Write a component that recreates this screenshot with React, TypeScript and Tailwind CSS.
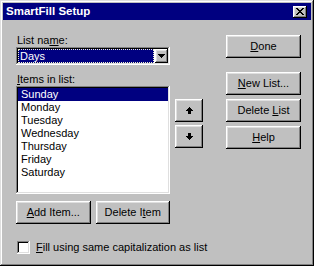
import React from "react";

const raised =
  "bg-[#c0c0c0] shadow-[inset_-1px_-1px_#000,inset_1px_1px_#fff,inset_-2px_-2px_#808080,inset_2px_2px_#dfdfdf]";
const sunken =
  "shadow-[inset_-1px_-1px_#fff,inset_1px_1px_#808080,inset_-2px_-2px_#dfdfdf,inset_2px_2px_#000]";

const days = ["Sunday", "Monday", "Tuesday", "Wednesday", "Thursday", "Friday", "Saturday"];

// pixel glyphs, one string per row
function Pixels({ rows, color = "#000" }: { rows: string[]; color?: string }) {
  const w = rows[0].length;
  return (
    <svg width={w} height={rows.length} viewBox={`0 0 ${w} ${rows.length}`} shapeRendering="crispEdges">
      {rows.map((r, y) =>
        r.split("").map((c, x) => (c === "x" ? <rect key={`${x}-${y}`} x={x} y={y} width={1} height={1} fill={color} /> : null))
      )}
    </svg>
  );
}

const closeX = ["xx....xx", ".xx..xx.", "..xxxx..", "...xx...", "..xxxx..", ".xx..xx.", "xx....xx"];
const downTri = ["xxxxxxx", ".xxxxx.", "..xxx..", "...x..."];
const upArrow = ["...x...", "..xxx..", ".xxxxx.", "xxxxxxx", "..xxx..", "..xxx..", "..xxx.."];
const downArrow = [...upArrow].reverse();

function Btn({ children, className = "" }: { children: React.ReactNode; className?: string }) {
  return (
    <div className={`${raised} flex items-center justify-center w-[75px] h-[23px] ${className}`}>
      <span className="leading-[13px] whitespace-nowrap">{children}</span>
    </div>
  );
}

export default function App() {
  return (
    <div className="w-[314px] h-[266px] bg-[#c0c0c0] p-[3px] flex flex-col font-['Liberation_Sans',Arial,sans-serif] text-[11px] text-black shadow-[inset_-1px_-1px_#000,inset_1px_1px_#dfdfdf,inset_-2px_-2px_#808080,inset_2px_2px_#fff]">
      {/* title bar */}
      <div className="h-[17px] bg-[#000080] flex items-center justify-between pl-[3px] pr-[4px]">
        <span className="text-white font-bold text-[11.5px] leading-[17px]">SmartFill Setup</span>
        <div className={`${raised} w-[14px] h-[12px] flex items-center justify-center`}>
          <Pixels rows={closeX} />
        </div>
      </div>

      <div className="flex-1 flex items-start pl-[13px]">
        {/* left column */}
        <div className="w-[154px] pt-[14px] flex flex-col">
          <div className="leading-[13px] pl-px">
            List na<u>m</u>e:
          </div>
          <div className={`${sunken} bg-white h-[18px] p-[2px] flex`}>
            <div className="flex-1 bg-[#000080] border border-dotted border-[#f0f0d0] text-white leading-[12px] pl-[1px] mr-px">
              Days
            </div>
            <div className={`${raised} w-[13px] h-[14px] flex items-center justify-center`}>
              <Pixels rows={downTri} />
            </div>
          </div>

          <div className="leading-[13px] mt-[8px] pl-px">
            <u>I</u>tems in list:
          </div>
          <div className={`${sunken} bg-white h-[108px] p-[2px]`}>
            {days.map((d, i) => (
              <div
                key={d}
                className={`h-[13px] leading-[13px] pl-[3px] ${i === 0 ? "bg-[#000080] text-white" : ""}`}
              >
                {d}
              </div>
            ))}
          </div>

          <div className="flex gap-[5px] mt-[7px]">
            <Btn>
              <u>A</u>dd Item...
            </Btn>
            <Btn>
              Delete I<u>t</u>em
            </Btn>
          </div>

          <div className="flex items-center mt-[17px] ml-px whitespace-nowrap">
            <div className={`${sunken} bg-white w-[13px] h-[13px] shrink-0`} />
            <span className="ml-[6px] leading-[13px]">
              <u>F</u>ill using same capitalization as list
            </span>
          </div>
        </div>

        {/* arrow buttons */}
        <div className="ml-[5px] mt-[79px] flex flex-col gap-[3px]">
          <div className={`${raised} w-[28px] h-[23px] flex items-center justify-center`}>
            <Pixels rows={upArrow} />
          </div>
          <div className={`${raised} w-[28px] h-[23px] flex items-center justify-center`}>
            <Pixels rows={downArrow} />
          </div>
        </div>

        {/* right column */}
        <div className="ml-[23px] pt-[15px] flex flex-col">
          <Btn>
            <u>D</u>one
          </Btn>
          <Btn className="mt-[14px]">
            <u>N</u>ew List...
          </Btn>
          <Btn className="mt-[4px]">
            Delete <u>L</u>ist
          </Btn>
          <Btn className="mt-[4px]">
            <u>H</u>elp
          </Btn>
        </div>
      </div>
    </div>
  );
}
